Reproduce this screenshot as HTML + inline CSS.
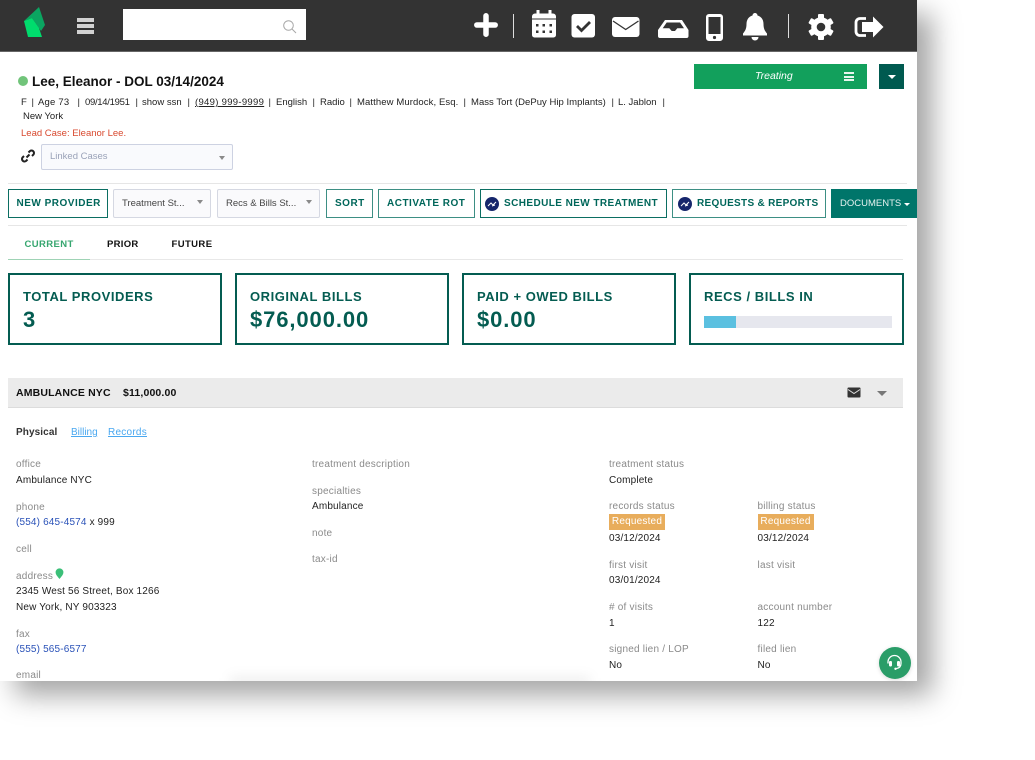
<!DOCTYPE html>
<html><head><meta charset="utf-8"><style>
html,body{margin:0;padding:0;background:#fff;width:1035px;height:760px;overflow:hidden;font-family:"Liberation Sans",sans-serif}
#p{position:absolute;left:0;top:0;width:917px;height:681px;background:#fff;box-shadow:15px 14px 26px rgba(0,0,0,.36);overflow:hidden}
#c{position:absolute;left:0;top:0;width:917px;height:681px;filter:blur(.3px)}
.t{position:absolute;white-space:nowrap;line-height:14px;font-size:10px;color:#222}
.m{top:96px;font-size:9.500px}
.v{letter-spacing:.16px}
.b{position:absolute;box-sizing:border-box}
.l{color:#8a8a8a;letter-spacing:.22px}
.btn{position:absolute;box-sizing:border-box;top:189px;height:29px;border:1.5px solid #3d8f84;background:#fff}
.bt{position:absolute;white-space:nowrap;line-height:14px;top:197px;font-size:10px;font-weight:bold;color:#00665a;letter-spacing:.5px}
.sel{position:absolute;box-sizing:border-box;top:189px;height:29px;border:1px solid #d5d8e2;background:#fafafc;border-radius:2px}
.card{position:absolute;box-sizing:border-box;top:273px;height:72px;border:2px solid #045c51;background:#fff}
.cl{position:absolute;white-space:nowrap;line-height:16px;top:289px;font-size:13px;font-weight:bold;color:#045c51;letter-spacing:.55px}
.cv{position:absolute;white-space:nowrap;line-height:26px;top:307px;font-size:22px;font-weight:bold;color:#045c51;letter-spacing:.9px}
.req{position:absolute;top:512.500px;height:16px;width:56px;background:#e8ad5c;color:#fff;font-size:10px;line-height:16px;text-align:center;letter-spacing:.2px}
.sep{position:absolute;top:14px;width:1.200px;height:24px;background:#ddd}
svg{position:absolute}
.car{position:absolute;width:0;height:0;border-left:3.500px solid transparent;border-right:3.500px solid transparent;border-top:4px solid #8a8a8a}
</style></head><body>
<div id="p"><div id="c">
<div class="b" style="left:0;top:0;width:917px;height:52px;background:#333;border-bottom:1px solid #666"></div>
<svg style="left:20px;top:5px" width="28" height="34" viewBox="0 0 28 34"><path d="M4 16L19 2 25 20 21 26 12 13z" fill="#0ba561"/><path d="M4 16L12 13 19 23 22 32 8 32z" fill="#00dc6d"/></svg>
<div class="b" style="left:77px;top:18px;width:17px;height:4px;background:#d2d2d2"></div>
<div class="b" style="left:77px;top:24px;width:17px;height:4px;background:#d2d2d2"></div>
<div class="b" style="left:77px;top:30px;width:17px;height:3.500px;background:#d2d2d2"></div>
<div class="b" style="left:123px;top:9px;width:183px;height:31px;background:#fff"></div>
<svg style="left:282px;top:19px" width="15" height="15" viewBox="0 0 15 15" fill="none" stroke="#a8a8a8" stroke-width="1"><circle cx="6.500" cy="6.500" r="4.800"/><path d="M10 10l4 4"/></svg>
<svg style="left:470px;top:8px" width="420" height="36" viewBox="470 8 420 36" fill="#fff">
<path d="M486 15.800v18.400M476.800 25h18.400" stroke="#fff" stroke-width="5.500" stroke-linecap="round" fill="none"/>
<path d="M532 16.500a3 3 0 0 1 3-3h1.500v-3.500h3v3.500h9v-3.500h3v3.500h1.500a3 3 0 0 1 3 3v2h-24zM532 19.500h24V35a2.500 2.500 0 0 1-2.500 2.500h-19A2.500 2.500 0 0 1 532 35z"/>
<g fill="#333"><rect x="536" y="24" width="2.500" height="2.500"/><rect x="542.500" y="24" width="2.500" height="2.500"/><rect x="549.500" y="24" width="2.500" height="2.500"/><rect x="536" y="30.500" width="2.500" height="2.500"/><rect x="542.500" y="30.500" width="2.500" height="2.500"/><rect x="549.500" y="30.500" width="2.500" height="2.500"/></g>
<rect x="571.500" y="14" width="23.500" height="23.500" rx="3"/><path d="M577 26l4.500 4.500 8.500-8.500" stroke="#333" stroke-width="2.800" fill="none"/>
<rect x="612" y="17" width="27.500" height="20" rx="3"/><path d="M613 21l12.700 8.500L638.500 21" stroke="#333" stroke-width="1.300" fill="none"/>
<path fill-rule="evenodd" d="M665 20h17l6.500 10v6a2 2 0 0 1-2 2h-26.500a2 2 0 0 1-2-2v-6zM666.700 22.500L662.700 28.300h6.600l2.400 2.700h3.300l2.300-2.700h6.700L680 22.500z"/>
<path fill-rule="evenodd" d="M709 14h11a3 3 0 0 1 3 3v21a3 3 0 0 1-3 3h-11a3 3 0 0 1-3-3v-21a3 3 0 0 1 3-3zM708.500 17v17h12V17z"/><circle cx="714.500" cy="37.500" r="1.600" fill="#333"/>
<path d="M755 13a2.500 2.500 0 0 1 2.500 2.500c4 1 6 4.500 6 8.500 0 5 1.500 7 3.500 9.500v2h-24v-2c2-2.500 3.500-4.500 3.500-9.500 0-4 2-7.500 6-8.500A2.500 2.500 0 0 1 755 13zM751.500 37h7a3.500 3.500 0 0 1-7 0z"/>
<g transform="translate(821 27)"><circle r="9.800"/><rect x="-3" y="-13" width="6" height="26" rx="1"/><rect x="-3" y="-13" width="6" height="26" rx="1" transform="rotate(60)"/><rect x="-3" y="-13" width="6" height="26" rx="1" transform="rotate(120)"/><circle r="4.300" fill="#333"/></g>
<path d="M866 18.500h-6a4 4 0 0 0-4 4v9a4 4 0 0 0 4 4h6" fill="none" stroke="#fff" stroke-width="2.800"/><path d="M873 16.500L883.500 27 873 37.500V32h-11V22h11z"/>
</svg>
<div class="sep" style="left:513px"></div><div class="sep" style="left:788px"></div>

<div class="b" style="left:18px;top:76px;width:10px;height:10px;border-radius:50%;background:#71c47a"></div>
<div class="t" style="left:32px;top:75px;font-size:13.500px;font-weight:bold;color:#111">Lee, Eleanor - DOL 03/14/2024</div>
<div class="t m" style="left:21px">F</div><div class="t m" style="left:31.500px">|</div>
<div class="t m" style="left:38px;letter-spacing:.2px">Age 73</div><div class="t m" style="left:77.500px">|</div>
<div class="t m" style="left:85px;letter-spacing:-.3px">09/14/1951</div><div class="t m" style="left:135.500px">|</div>
<div class="t m" style="left:142px">show ssn</div><div class="t m" style="left:187.500px">|</div>
<div class="t m" style="left:195px;text-decoration:underline;letter-spacing:.3px">(949) 999-9999</div><div class="t m" style="left:268.500px">|</div>
<div class="t m" style="left:276px">English</div><div class="t m" style="left:312.500px">|</div>
<div class="t m" style="left:320px">Radio</div><div class="t m" style="left:349.500px">|</div>
<div class="t m" style="left:357px;letter-spacing:.1px">Matthew Murdock, Esq.</div><div class="t m" style="left:463.500px">|</div>
<div class="t m" style="left:471px;letter-spacing:.03px">Mass Tort (DePuy Hip Implants)</div><div class="t m" style="left:611.500px">|</div>
<div class="t m" style="left:618px">L. Jablon</div><div class="t m" style="left:662.500px">|</div>
<div class="t" style="left:23px;top:110px;font-size:9.500px">New York</div>
<div class="t" style="left:21px;top:127px;font-size:9.500px;color:#d8492f">Lead Case: Eleanor Lee.</div>
<svg style="left:20px;top:148px" width="16" height="16" viewBox="0 0 16 16" fill="none" stroke="#222" stroke-width="2"><path d="M6.500 9.500l3-3"/><path d="M8.500 4.500l1.500-1.500a2.500 2.500 0 0 1 3.500 3.500L12 8"/><path d="M7.500 11.500l-1.500 1.500a2.500 2.500 0 0 1-3.500-3.500L4 8"/></svg>
<div class="b" style="left:41px;top:144px;width:192px;height:26px;border:1px solid #cdd2e2;background:#f9fafd;border-radius:2px"></div>
<div class="t" style="left:50px;top:150px;font-size:9.500px;color:#9aa2b8">Linked Cases</div>
<div class="car" style="left:219px;top:155.500px"></div>

<div class="b" style="left:8px;top:183px;width:899px;height:1px;background:#e6e6e6"></div>
<div class="btn" style="left:8px;width:100px;border-color:#0b6e62"></div><div class="bt" style="left:16.500px">NEW PROVIDER</div>
<div class="sel" style="left:113px;width:98px"></div><div class="t" style="left:122px;top:197px;font-size:9.500px;color:#444">Treatment St...</div><div class="car" style="left:196.500px;top:200px"></div>
<div class="sel" style="left:217px;width:103px"></div><div class="t" style="left:226px;top:197px;font-size:9.500px;color:#444">Recs &amp; Bills St...</div><div class="car" style="left:305.500px;top:200px"></div>
<div class="btn" style="left:326px;width:47px"></div><div class="bt" style="left:335px">SORT</div>
<div class="btn" style="left:378px;width:96.500px"></div><div class="bt" style="left:387px">ACTIVATE ROT</div>
<div class="btn" style="left:480px;width:187px;border-color:#0b6e62"></div>
<div class="b" style="left:485px;top:197px;width:14px;height:14px;border-radius:50%;background:#16266c"></div>
<svg style="left:485px;top:197px" width="14" height="14" viewBox="0 0 14 14" fill="none" stroke="#fff" stroke-width="1"><path d="M3 9l3-3 2 2 3-3M7 9l3-1"/></svg>
<div class="bt" style="left:504px;letter-spacing:.42px">SCHEDULE NEW TREATMENT</div>
<div class="btn" style="left:672px;width:154px;"></div>
<div class="b" style="left:678px;top:197px;width:14px;height:14px;border-radius:50%;background:#16266c"></div>
<svg style="left:678px;top:197px" width="14" height="14" viewBox="0 0 14 14" fill="none" stroke="#fff" stroke-width="1"><path d="M3 9l3-3 2 2 3-3M7 9l3-1"/></svg>
<div class="bt" style="left:697px;letter-spacing:.3px">REQUESTS &amp; REPORTS</div>
<div class="b" style="left:831px;top:189px;width:86px;height:29px;background:#00756a"></div>
<div class="t" style="left:840px;top:197px;font-size:9.500px;color:#e6f2f0">DOCUMENTS</div>
<div class="car" style="left:903.500px;top:203px;border-top-color:#fff;border-left-width:3px;border-right-width:3px;border-top-width:3px"></div>
<div class="b" style="left:8px;top:225px;width:899px;height:1px;background:#e6e6e6"></div>

<div class="t" style="left:24.500px;top:238px;font-weight:bold;font-size:9.500px;color:#36a66f;letter-spacing:.4px">CURRENT</div>
<div class="t" style="left:107px;top:238px;font-weight:bold;font-size:9.500px;color:#111;letter-spacing:.3px">PRIOR</div>
<div class="t" style="left:171.500px;top:238px;font-weight:bold;font-size:9.500px;color:#111;letter-spacing:.4px">FUTURE</div>
<div class="b" style="left:8px;top:259px;width:895px;height:1px;background:#e8e8e8"></div>
<div class="b" style="left:8px;top:259px;width:82px;height:1px;background:#9fd3b5"></div>

<div class="card" style="left:8px;width:214px"></div><div class="cl" style="left:23px">TOTAL PROVIDERS</div><div class="cv" style="left:23px">3</div>
<div class="card" style="left:235px;width:214px"></div><div class="cl" style="left:250px">ORIGINAL BILLS</div><div class="cv" style="left:250px">$76,000.00</div>
<div class="card" style="left:462px;width:214px"></div><div class="cl" style="left:477px">PAID + OWED BILLS</div><div class="cv" style="left:477px">$0.00</div>
<div class="card" style="left:689px;width:214.500px"></div><div class="cl" style="left:704px">RECS / BILLS IN</div>
<div class="b" style="left:704px;top:316px;width:188px;height:11.500px;background:#e6e7ee"></div>
<div class="b" style="left:704px;top:316px;width:32px;height:11.500px;background:#5bc0e0"></div>

<div class="b" style="left:8px;top:378px;width:895px;height:30px;background:#ebebeb;border-bottom:1px solid #dcdcdc"></div>
<div class="t" style="left:16px;top:386px;font-size:10.500px;font-weight:bold;color:#111;letter-spacing:.15px">AMBULANCE NYC</div>
<div class="t" style="left:123px;top:386px;font-size:10.500px;font-weight:bold;color:#111;letter-spacing:.15px">$11,000.00</div>
<svg style="left:847px;top:387px" width="14" height="11" viewBox="0 0 14 11"><rect x=".5" y=".5" width="13" height="10" rx="1" fill="#333"/><path d="M1 2.500l6 4 6-4" stroke="#ddd" fill="none"/></svg>
<div class="car" style="left:877px;top:390.500px;border-left-width:5px;border-right-width:5px;border-top-width:5px;border-top-color:#777"></div>

<div class="t" style="left:16px;top:426px;font-weight:bold;color:#333;letter-spacing:.1px">Physical</div>
<div class="t" style="left:71px;top:426px;color:#4aa8f0;text-decoration:underline">Billing</div>
<div class="t" style="left:108px;top:426px;color:#4aa8f0;text-decoration:underline;letter-spacing:.25px">Records</div>

<div style="position:absolute;left:0;top:1.500px;width:917px;height:680px">
<div class="t l" style="left:16px;top:456px">office</div><div class="t v" style="left:16px;top:472px">Ambulance NYC</div>
<div class="t l" style="left:16px;top:499px">phone</div><div class="t v" style="left:16px;top:514px"><span style="color:#2a52b8">(554) 645-4574</span> x 999</div>
<div class="t l" style="left:16px;top:541px">cell</div>
<div class="t l" style="left:16px;top:568px">address</div>
<svg style="left:55px;top:566.500px" width="9" height="12" viewBox="0 0 9 12"><path d="M4.500 11C3 9 .6 7 .6 4.300a3.900 3.900 0 0 1 7.800 0c0 2.700-2.400 4.700-3.900 6.700z" fill="#3bbf78"/></svg>
<div class="t v" style="left:16px;top:583px">2345 West 56 Street, Box 1266</div>
<div class="t v" style="left:16px;top:599px">New York, NY 903323</div>
<div class="t l" style="left:16px;top:626px">fax</div><div class="t v" style="left:16px;top:641px;color:#2a52b8">(555) 565-6577</div>
<div class="t l" style="left:16px;top:667px">email</div>

<div class="t l" style="left:312px;top:456px">treatment description</div>
<div class="t l" style="left:312px;top:483px">specialties</div><div class="t v" style="left:312px;top:498.500px">Ambulance</div>
<div class="t l" style="left:312px;top:525px">note</div>
<div class="t l" style="left:312px;top:551px">tax-id</div>

<div class="t l" style="left:609px;top:456px">treatment status</div><div class="t v" style="left:609px;top:472px">Complete</div>
<div class="t l" style="left:609px;top:498.500px">records status</div><div class="req" style="left:609px">Requested</div><div class="t v" style="left:609px;top:530px">03/12/2024</div>
<div class="t l" style="left:609px;top:557px">first visit</div><div class="t v" style="left:609px;top:572.500px">03/01/2024</div>
<div class="t l" style="left:609px;top:599px"># of visits</div><div class="t v" style="left:609px;top:615px">1</div>
<div class="t l" style="left:609px;top:641px">signed lien / LOP</div><div class="t v" style="left:609px;top:657px">No</div>

<div class="t l" style="left:757.500px;top:498.500px">billing status</div><div class="req" style="left:757.500px">Requested</div><div class="t v" style="left:757.500px;top:530px">03/12/2024</div>
<div class="t l" style="left:757.500px;top:557px">last visit</div>
<div class="t l" style="left:757.500px;top:599px">account number</div><div class="t v" style="left:757.500px;top:615px">122</div>
<div class="t l" style="left:757.500px;top:641px">filed lien</div><div class="t v" style="left:757.500px;top:657px">No</div>
</div>

<div class="b" style="left:230px;top:677px;width:360px;height:10px;background:rgba(0,0,0,.07);filter:blur(6px)"></div>
<div class="b" style="left:878.500px;top:647px;width:32px;height:32px;border-radius:50%;background:#2a9d68;box-shadow:0 1px 4px rgba(0,0,0,.15)"></div>
<svg style="left:886px;top:654px" width="17" height="18" viewBox="0 0 17 18" fill="none" stroke="#fff" stroke-width="1.300"><path d="M2 9.500V8a6.500 6.500 0 0 1 13 0v1.500c0 3-1.500 4.500-4.500 5"/><rect x="3" y="7" width="3" height="5.500" rx="1.200" fill="#fff" stroke="none"/><rect x="11" y="7" width="3" height="5.500" rx="1.200" fill="#fff" stroke="none"/><circle cx="9.500" cy="14.800" r="1.200" fill="#fff" stroke="none"/></svg>

<div class="b" style="left:694px;top:64px;width:173px;height:25px;background:#12a05c"></div>
<div class="t" style="left:755px;top:69px;font-size:10.500px;font-style:italic;color:#fff">Treating</div>
<div class="b" style="left:844px;top:72px;width:10px;height:2.200px;background:#e8f6ee"></div>
<div class="b" style="left:844px;top:75.500px;width:10px;height:2.200px;background:#e8f6ee"></div>
<div class="b" style="left:844px;top:79px;width:10px;height:2.200px;background:#e8f6ee"></div>
<div class="b" style="left:879px;top:64px;width:24.500px;height:25px;background:#005a50"></div>
<div class="car" style="left:887.500px;top:74.500px;border-top-color:#fff;border-left-width:4px;border-right-width:4px"></div>
</div></div>
</body></html>
